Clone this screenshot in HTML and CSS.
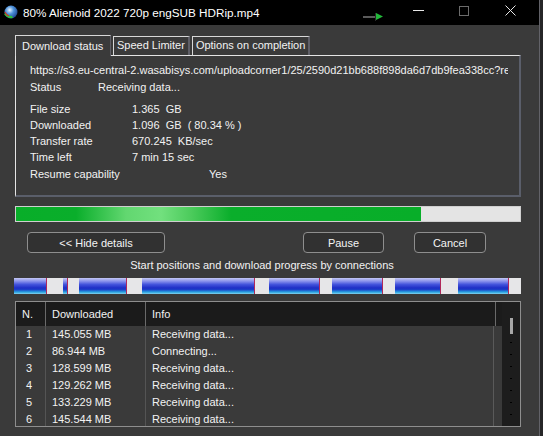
FILE: index.html
```html
<!DOCTYPE html>
<html>
  <head>
    <meta charset="UTF-8">
    <title>80% Alienoid 2022 720p engSUB HDRip.mp4</title>
    <link rel="stylesheet" href="styles.css">
  </head>
  <body>
    <div class="window">
      <!-- title bar -->
      <div class="titlebar">
        <svg class="appIcon" width="15" height="15" viewBox="0 0 15 15">
          <defs>
            <radialGradient id="globe" cx="0.4" cy="0.35" r="0.7">
              <stop offset="0" stop-color="#e8f4ff"/>
              <stop offset="0.45" stop-color="#4a8fd8"/>
              <stop offset="1" stop-color="#1c3f8a"/>
            </radialGradient>
          </defs>
          <circle cx="8" cy="7" r="6.5" fill="url(#globe)"/>
          <path d="M1 9 Q4 14 10 13 L9 11 Q5 11 3 8 Z" fill="#2fbf3a"/>
          <path d="M2 7 Q3 10 6 11" stroke="#d0342c" stroke-width="1.2" fill="none"/>
        </svg>
        <span class="title">80% Alienoid 2022 720p engSUB HDRip.mp4</span>
        <svg class="flag" width="21" height="8" viewBox="0 0 21 8">
          <rect x="0" y="3" width="13" height="2" fill="#5a5a5a"/>
          <rect x="12" y="0" width="1" height="8" fill="#2a2a2a"/>
          <path d="M13 0 L20 3.5 L13 7 Z" fill="#22b83a"/>
        </svg>
        <div class="controls">
          <span class="ctl"><span class="minGlyph"></span></span>
          <span class="ctl"><span class="maxGlyph"></span></span>
          <span class="ctl">
            <svg width="11" height="11" viewBox="0 0 11 11">
              <path d="M0.5 0.5 L10.5 10.5 M10.5 0.5 L0.5 10.5" stroke="#e8e8e8" stroke-width="1"/>
            </svg>
          </span>
        </div>
      </div>

      <div class="content">
        <div class="tabs">
          <div class="tab active">Download status</div>
          <div class="tab">Speed Limiter</div>
          <div class="tab">Options on completion</div>
        </div>

        <div class="panel">
          <div class="url">https://s3.eu-central-2.wasabisys.com/uploadcorner1/25/2590d21bb688f898da6d7db9fea338cc?re</div>
          <div class="line"><span class="label shortLabel">Status</span><span>Receiving data...</span></div>
          <div class="stats">
            <div class="line"><span class="label">File size</span><span>1.365&nbsp; GB</span></div>
            <div class="line"><span class="label">Downloaded</span><span>1.096&nbsp; GB&nbsp; ( 80.34 % )</span></div>
            <div class="line"><span class="label">Transfer rate</span><span>670.245&nbsp; KB/sec</span></div>
            <div class="line"><span class="label">Time left</span><span>7 min 15 sec</span></div>
            <div class="line"><span class="label">Resume capability</span><span class="yes">Yes</span></div>
          </div>
        </div>

        <div class="progress"><div class="progressFill" style="width: 80.34%"></div></div>

        <div class="buttons">
          <button class="button hideButton">&lt;&lt; Hide details</button>
          <button class="button pauseButton">Pause</button>
          <button class="button cancelButton">Cancel</button>
        </div>

        <div class="caption">Start positions and download progress by connections</div>

        <div class="connections">
          <div class="seg done" style="width: 33px"></div>
          <div class="seg" style="width: 16px"></div>
          <div class="seg done" style="width: 5px"></div>
          <div class="seg" style="width: 11px"></div>
          <div class="seg done" style="width: 48px"></div>
          <div class="seg" style="width: 15px"></div>
          <div class="seg done" style="width: 113px"></div>
          <div class="seg" style="width: 14px"></div>
          <div class="seg done" style="width: 51px"></div>
          <div class="seg" style="width: 12px"></div>
          <div class="seg done" style="width: 51px"></div>
          <div class="seg" style="width: 12px"></div>
          <div class="seg done" style="width: 46px"></div>
          <div class="seg" style="width: 17px"></div>
          <div class="seg done" style="width: 51px"></div>
          <div class="seg" style="width: 12px"></div>
        </div>

        <div class="list">
          <div class="listMain">
            <div class="listHead">
              <div class="hcell colN">N.</div>
              <div class="hcell colSize">Downloaded</div>
              <div class="hcell colInfo">Info</div>
              <div class="hcell colPad"></div>
            </div>
            <div class="listBody">
              <div class="listRow"><div class="cell colN">1</div><div class="cell colSize">145.055 MB</div><div class="cell colInfo">Receiving data...</div><div class="cell colPad"></div></div>
              <div class="listRow"><div class="cell colN">2</div><div class="cell colSize">86.944 MB</div><div class="cell colInfo">Connecting...</div><div class="cell colPad"></div></div>
              <div class="listRow"><div class="cell colN">3</div><div class="cell colSize">128.599 MB</div><div class="cell colInfo">Receiving data...</div><div class="cell colPad"></div></div>
              <div class="listRow"><div class="cell colN">4</div><div class="cell colSize">129.262 MB</div><div class="cell colInfo">Receiving data...</div><div class="cell colPad"></div></div>
              <div class="listRow"><div class="cell colN">5</div><div class="cell colSize">133.229 MB</div><div class="cell colInfo">Receiving data...</div><div class="cell colPad"></div></div>
              <div class="listRow"><div class="cell colN">6</div><div class="cell colSize">145.544 MB</div><div class="cell colInfo">Receiving data...</div><div class="cell colPad"></div></div>
            </div>
          </div>
          <div class="scroll">
            <div class="thumb"></div>
            <div class="ticks"></div>
          </div>
        </div>
      </div>
    </div>
  </body>
</html>
```

FILE: styles.css
```css
* {
  box-sizing: border-box;
}

body {
  margin: 0;
  background-color: #262628;
  font-family: "Liberation Sans", Arial, sans-serif;
  font-size: 11px;
  color: #f2f2f2;
}

.window {
  width: 540px;
  height: 436px;
  background-color: #3a3a3a;
  border-right: 1px solid #626268;
  overflow: hidden;
}

/* title bar */
.titlebar {
  height: 25px;
  background-color: #000;
  display: flex;
  align-items: center;
}

.appIcon {
  margin-left: 3px;
}

.title {
  margin-left: 5px;
  font-size: 11.7px;
  color: #fff;
  white-space: nowrap;
}

.flag {
  margin-left: 103px;
  margin-top: 8px;
}

.controls {
  margin-left: auto;
  margin-right: 6px;
  display: flex;
  align-self: stretch;
}

.ctl {
  width: 46px;
  display: flex;
  align-items: center;
  justify-content: center;
  padding-bottom: 4px;
}

.minGlyph {
  width: 11px;
  height: 1px;
  background-color: #e8e8e8;
}

.maxGlyph {
  width: 10px;
  height: 10px;
  border: 1px solid #6c6c6c;
}

/* content */
.content {
  padding-left: 15px;
  width: 521px;
}

.tabs {
  display: flex;
  align-items: flex-end;
  margin-top: 9px;
  height: 21px;
}

.tab {
  height: 19px;
  line-height: 16px;
  padding: 0 3px 0 3px;
  border-top: 1px solid #d8d8d8;
  border-left: 1px solid #d8d8d8;
  border-right: 2px solid #5e5e66;
  white-space: nowrap;
  margin-left: 2px;
}

.tab.active {
  height: 21px;
  line-height: 20px;
  margin-left: 0;
  padding: 0 6px 0 6px;
  width: 96px;
  border-right: 1px solid #5e5e66;
  margin-bottom: -1px;
  background-color: #3a3a3a;
  position: relative;
  z-index: 1;
}

.panel {
  height: 142px;
  border-top: 1px solid #e4e4e4;
  border-left: 1px solid #e4e4e4;
  border-right: 2px solid #5a5e6a;
  border-bottom: 2px solid #5a5e6a;
  padding: 6px 0 0 14px;
}

.url {
  height: 17px;
  line-height: 17px;
  width: 478px;
  overflow: hidden;
  white-space: nowrap;
}

.line {
  display: flex;
  height: 16px;
  line-height: 16px;
  white-space: nowrap;
}

.panel > .line {
  height: 17px;
  line-height: 17px;
}

.label {
  width: 102px;
}

.shortLabel {
  width: 68px;
}

.stats {
  margin-top: 5px;
}

.stats .line:last-child {
  margin-top: 1px;
}

.yes {
  padding-left: 77px;
}

/* overall progress */
.progress {
  margin-top: 9px;
  height: 16px;
  border: 1px solid #cfcfcf;
  background-color: #e4e4e4;
}

.progressFill {
  height: 100%;
  background: linear-gradient(to right, #08ae29 0, #0aae2b 60px, #62d770 110px, #72e07e 145px, #4ccb5c 175px, #0aae2b 215px, #08ae29 100%);
}

/* buttons */
.buttons {
  display: flex;
  margin-top: 10px;
  height: 21px;
}

.button {
  height: 21px;
  border: 1px solid #8e8e8e;
  border-radius: 4px;
  background-color: #313131;
  color: #f4f4f4;
  font-family: "Liberation Sans", Arial, sans-serif;
  font-size: 11px;
  padding: 0;
}

.hideButton {
  margin-left: 12px;
  width: 138px;
}

.pauseButton {
  margin-left: 138px;
  width: 81px;
}

.cancelButton {
  margin-left: 30px;
  width: 72px;
}

.caption {
  margin-top: 5px;
  height: 14px;
  line-height: 14px;
  text-align: center;
  padding-right: 12px;
}

/* per-connection bar */
.connections {
  display: flex;
  margin-top: 6px;
  height: 16px;
  width: 507px;
  margin-left: -1px;
}

.seg {
  height: 100%;
  background-color: #e6e6e8;
}

.seg.done {
  background: linear-gradient(to bottom, #c4c8f4 0, #8a92ec 20%, #4454dc 40%, #1e2ec6 62%, #1c3ec8 72%, #28a4e0 88%, #86d2f0 100%);
  border-right: 1px solid #b0285a;
}

/* connections list */
.list {
  margin-top: 7px;
  height: 126px;
  border: 1px solid #8e8e8e;
  display: flex;
}

.listMain {
  width: 486px;
}

.listHead {
  display: flex;
  height: 24px;
  line-height: 24px;
  background-color: #1b1b1b;
}

.hcell {
  border-right: 1px solid #6a6a6a;
  white-space: nowrap;
}

.listRow {
  display: flex;
  height: 17px;
  line-height: 17px;
}

.listBody {
  height: 100px;
  overflow: hidden;
}

.cell {
  border-right: 1px solid #545454;
  white-space: nowrap;
}

.colN {
  width: 30px;
  padding-left: 6px;
}

.cell.colN {
  padding-left: 10px;
}

.colSize {
  width: 100px;
  padding-left: 6px;
}

.colInfo {
  width: 350px;
  padding-left: 6px;
}

.colPad {
  width: 6px;
  border-right: none;
}

.cell.colInfo {
  width: 348px;
  border-right: 1px solid #5a5a5a;
}

.cell.colPad {
  width: 8px;
}

.scroll {
  width: 18px;
  background-color: #1d1d1d;
  padding-top: 16px;
}

.thumb {
  margin-left: 8px;
  width: 3px;
  height: 16px;
  background-color: #a8a8a8;
}

.ticks {
  margin: 8px 0 0 8px;
  width: 2px;
  height: 76px;
  background: repeating-linear-gradient(to bottom, #000 0, #000 1px, transparent 1px, transparent 12px);
}
```
